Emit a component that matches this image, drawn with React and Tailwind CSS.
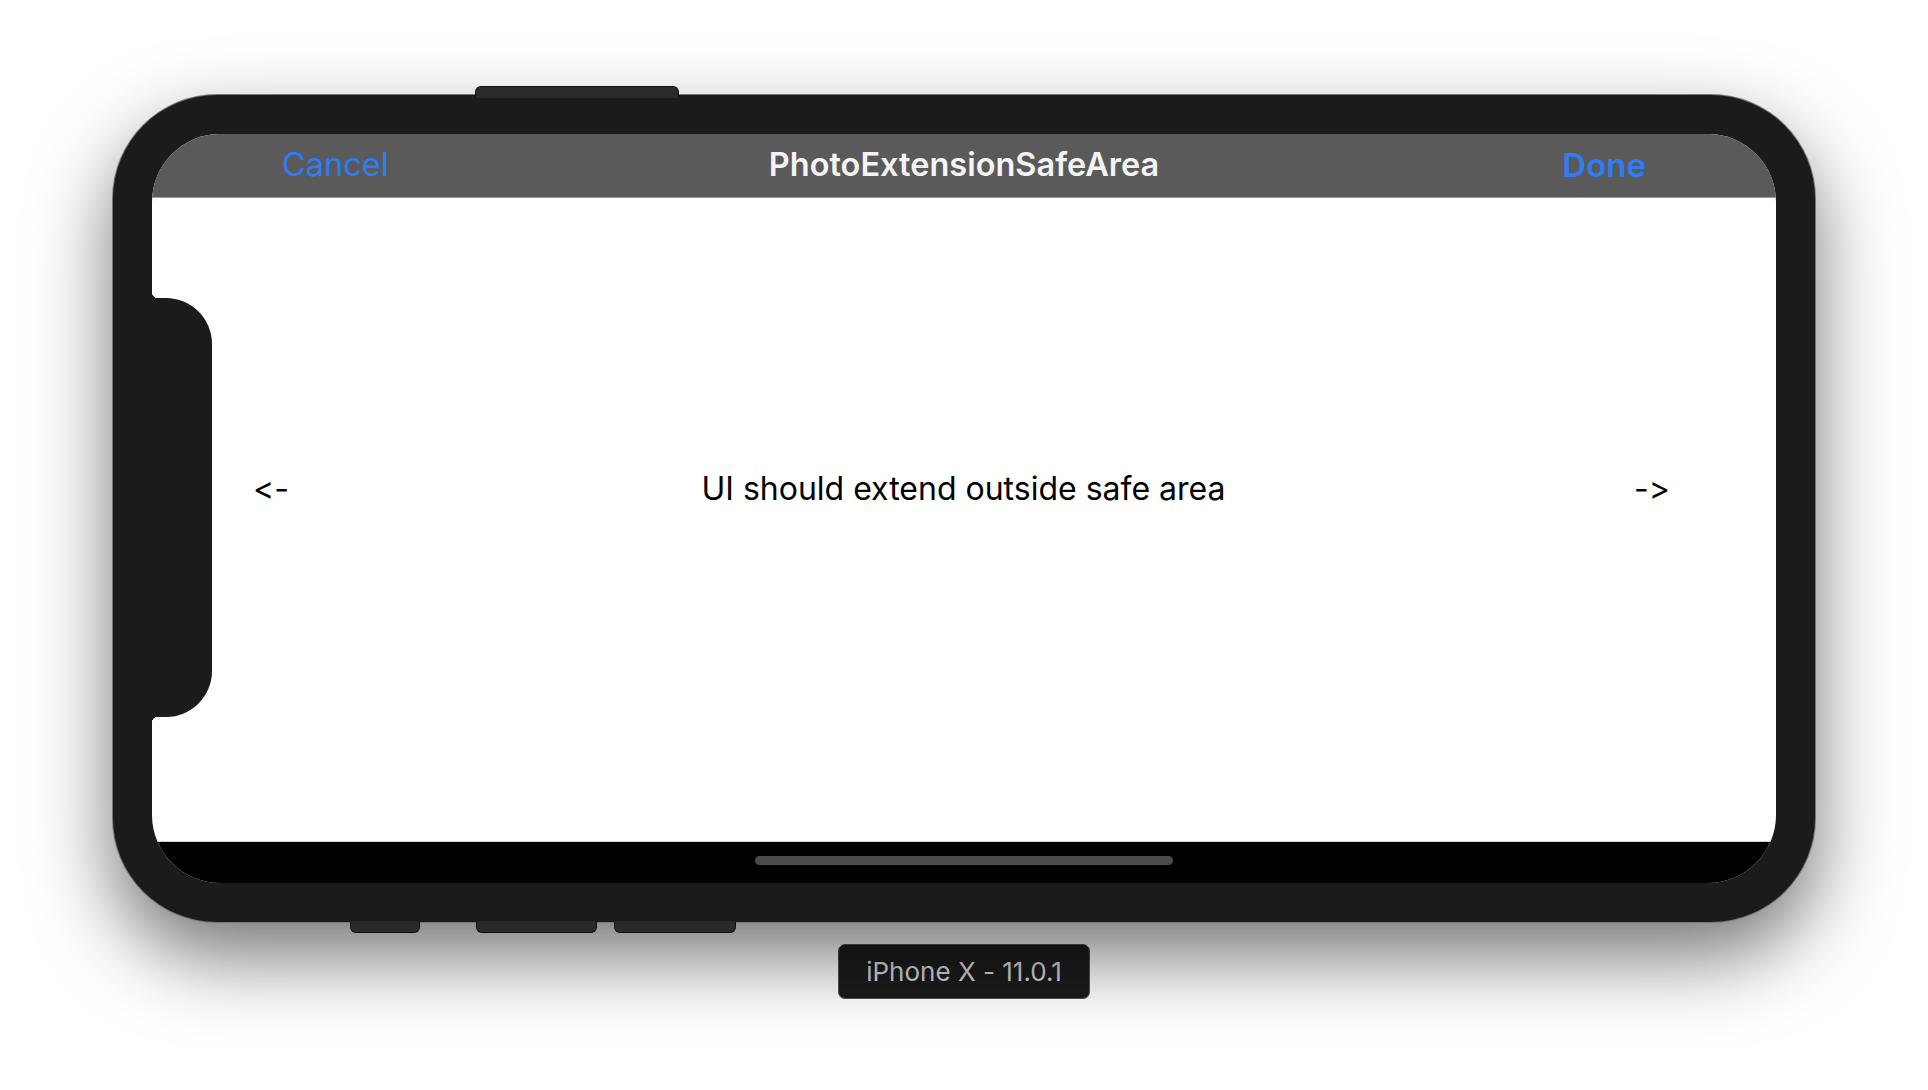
export default function App() {
  return (
    <div className="w-[1928px] h-[1090px] bg-white flex flex-col items-center pt-[95px] overflow-hidden font-['Inter','Roboto',sans-serif] [font-feature-settings:'calt'_0,'liga'_0]">
      {/* device frame */}
      <div className="relative w-[1702px] h-[827px] rounded-[104px] bg-[#1b1b1b] p-[39px] shadow-[0_0_0_1px_#777777,0_34px_80px_rgba(0,0,0,0.55)]">
        {/* hardware buttons */}
        <div className="absolute -top-[9px] left-[362px] w-[204px] h-[12px] rounded-t-[6px] bg-[#2a2a2a] border border-b-0 border-[#111]" />
        <div className="absolute -bottom-[11px] left-[237px] w-[70px] h-[12px] rounded-b-[6px] bg-[#2a2a2a] border border-t-0 border-[#111]" />
        <div className="absolute -bottom-[11px] left-[363px] w-[121px] h-[12px] rounded-b-[6px] bg-[#2a2a2a] border border-t-0 border-[#111]" />
        <div className="absolute -bottom-[11px] left-[501px] w-[122px] h-[12px] rounded-b-[6px] bg-[#2a2a2a] border border-t-0 border-[#111]" />

        {/* screen */}
        <div className="relative w-full h-full rounded-[68px] overflow-hidden bg-white flex flex-col">
          <div className="h-[64px] shrink-0 bg-[#5a5a5a] border-b border-[#9a9a9a] grid grid-cols-[1fr_auto_1fr] items-center px-[130px]">
            <span className="text-[32.5px] text-[#2f7cf6] justify-self-start">Cancel</span>
            <span className="text-[32.5px] font-semibold text-[#f4f4f4]">PhotoExtensionSafeArea</span>
            <span className="text-[33px] font-semibold text-[#2f7cf6] justify-self-end">Done</span>
          </div>

          <div className="flex-1 grid grid-cols-[1fr_auto_1fr] items-center pl-[101px] pr-[106px] pb-[62px] text-black">
            <span className="text-[32px] leading-[40px] justify-self-start">&lt;-</span>
            <span className="text-[32px] leading-[40px] translate-x-[2px]">UI should extend outside safe area</span>
            <span className="text-[32px] leading-[40px] justify-self-end">-&gt;</span>
          </div>

          <div className="h-[42px] shrink-0 bg-black border-t border-[#cfcfcf] flex items-center justify-center">
            <div className="w-[418px] h-[9px] rounded-full bg-[#4b4b4b] -mt-[4px]" />
          </div>

          {/* sensor housing */}
          <div className="absolute left-0 top-[164px] w-[60px] h-[419px] bg-[#1b1b1b] rounded-r-[46px]" />
          <div className="absolute left-0 top-[158px] w-[6px] h-[6px] bg-[radial-gradient(circle_at_100%_0,transparent_6px,#1b1b1b_6.5px)]" />
          <div className="absolute left-0 top-[583px] w-[6px] h-[6px] bg-[radial-gradient(circle_at_100%_100%,transparent_6px,#1b1b1b_6.5px)]" />
        </div>
      </div>

      <div className="mt-[22px] w-[252px] h-[55px] rounded-[7px] bg-[#1c1c1c] border border-[#555] flex items-center justify-center">
        <span className="text-[26px] text-[#d6d6d6]">iPhone X - 11.0.1</span>
      </div>
    </div>
  );
}
